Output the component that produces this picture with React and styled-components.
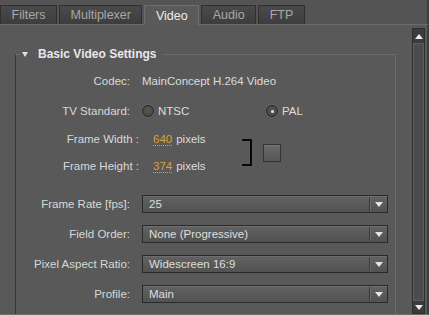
import React from 'react'
import styled, { createGlobalStyle, css } from 'styled-components'

const Global = createGlobalStyle`
    body {
        margin: 0;
        background: #555555;
        font-family: "Liberation Sans", "Noto Sans", sans-serif;
        font-size: 11.5px;
    }
`;

const Panel = styled.div`
    width: 429px;
    height: 315px;
    background: #595959;
    display: flex;
    flex-direction: column;
    overflow: hidden;
`;

const TabBar = styled.div`
    display: flex;
    gap: 2px;
    padding-top: 5px;
    background: #545454;
    border-bottom: 1px solid #6b6b6b;
    border-right: 2px solid #3e3e3e;
`;

const Tab = styled.div`
    box-sizing: border-box;
    height: 19px;
    padding: 0 10.5px;
    display: flex;
    align-items: center;
    font-size: 12.5px;
    border: 1px solid #303030;
    border-bottom: none;
    background: linear-gradient(#4a4a4a, #3d3d3d);
    color: #a9a9a9;
    ${p => p.$active && css`
        height: 20px;
        margin-bottom: -1px;
        background: #5a5a5a;
        border-color: #6d6d6d;
        color: #ececec;
    `}
`;

const Body = styled.div`
    flex: 1;
    display: flex;
    min-height: 0;
    border-bottom: 1px solid #6e6e6e;
`;

const Content = styled.div`
    flex: 1;
    padding: 22px 16px 0 15px;
    overflow: hidden;
`;

const Group = styled.fieldset`
    margin: 0;
    padding: 0 7px 20px 0;
    min-width: 0;
    border: 1px solid #6c6c6c;
    border-left-color: #363636;
    border-bottom: none;
`;

const Legend = styled.legend`
    margin-left: 4px;
    padding: 0 7px 0 2px;
    display: flex;
    align-items: center;
    gap: 10px;
    font-weight: bold;
    font-size: 12px;
    color: #e8e8e8;
`;

const Caret = styled.span`
    width: 0;
    height: 0;
    border-left: 3.5px solid transparent;
    border-right: 3.5px solid transparent;
    border-top: 5px solid #e0e0e0;
`;

const Row = styled.div`
    display: grid;
    grid-template-columns: 114px 1fr;
    column-gap: 12px;
    align-items: center;
    height: 18px;
    margin-top: ${p => p.$mt}px;
`;

const Label = styled.div`
    text-align: right;
    color: #d8d8d8;
    white-space: nowrap;
`;

const Value = styled.div`
    color: #dcdcdc;
    white-space: nowrap;
`;

const Radios = styled.div`
    display: grid;
    grid-template-columns: 124px 1fr;
`;

const RadioOption = styled.label`
    display: flex;
    align-items: center;
    gap: 4px;
    color: #dcdcdc;
`;

const RadioDot = styled.span`
    box-sizing: border-box;
    width: 12px;
    height: 12px;
    border-radius: 50%;
    border: 1px solid #262626;
    background: radial-gradient(circle at 50% 40%, #575757, #434343);
    box-shadow: 0 0 0 1px rgba(255, 255, 255, 0.07);
    display: flex;
    align-items: center;
    justify-content: center;
    &::after {
        content: "";
        width: 3px;
        height: 3px;
        border-radius: 50%;
        background: ${p => (p.$on ? '#e4e4e4' : 'transparent')};
    }
`;

const DimsRow = styled.div`
    display: flex;
    align-items: center;
    margin-top: 10px;
`;

const DimsGrid = styled.div`
    display: grid;
    grid-template-columns: 123px 89px;
    column-gap: 14px;
    row-gap: 9px;
    align-items: center;
    & > div {
        height: 18px;
        display: flex;
        align-items: center;
    }
`;

const DimLabel = styled.div`
    justify-content: flex-end;
    color: #d8d8d8;
    white-space: nowrap;
`;

const Num = styled.span`
    color: #d9a032;
    border-bottom: 1px dotted #d9a032;
    line-height: 12px;
    margin-right: 4px;
`;

const Bracket = styled.div`
    box-sizing: border-box;
    width: 10px;
    height: 27px;
    border: 2px solid #080808;
    border-left: none;
`;

const LinkButton = styled.div`
    box-sizing: border-box;
    width: 18px;
    height: 18px;
    margin-left: 11px;
    border: 1px solid #343434;
    background: linear-gradient(#6a6a6a, #575757);
    box-shadow: inset 0 1px 0 rgba(255, 255, 255, 0.1);
`;

const Select = styled.div`
    box-sizing: border-box;
    height: 18px;
    display: flex;
    align-items: center;
    border: 1px solid #2a2a2a;
    background: linear-gradient(#626262, #525252);
    box-shadow: inset 0 1px 0 rgba(255, 255, 255, 0.08);
    color: #dedede;
`;

const SelectText = styled.span`
    flex: 1;
    padding-left: 6px;
    white-space: nowrap;
`;

const SelectDivider = styled.span`
    width: 1px;
    height: 14px;
    background: #3a3a3a;
    box-shadow: 1px 0 0 #6a6a6a;
`;

const SelectArrow = styled.span`
    width: 17px;
    display: flex;
    justify-content: center;
    &::after {
        content: "";
        border-left: 4px solid transparent;
        border-right: 4px solid transparent;
        border-top: 5px solid #e6e6e6;
    }
`;

const ScrollBar = styled.div`
    width: 13px;
    margin: 3px 2px 0 0;
    display: flex;
    flex-direction: column;
    background: #484848;
    border: 1px solid #2e2e2e;
    box-sizing: border-box;
`;

const ScrollButton = styled.div`
    height: ${p => p.$h}px;
    display: flex;
    align-items: center;
    justify-content: center;
    background: #3c3c3c;
    &::after {
        content: "";
        border-left: 4px solid transparent;
        border-right: 4px solid transparent;
        ${p => (p.$up ? 'border-bottom: 5px solid #ececec;' : 'border-top: 5px solid #ececec;')}
    }
`;

const Thumb = styled.div`
    flex: 1;
    border: 1px solid #5e5e5e;
    background: #4c4c4c;
`;

const Side = styled.div`
    width: 2px;
    background: #3e3e3e;
`;

const tabs = ['Filters', 'Multiplexer', 'Video', 'Audio', 'FTP'];

const selects = [
    { label: 'Frame Rate [fps]:', value: '25', mt: 20 },
    { label: 'Field Order:', value: 'None (Progressive)', mt: 12 },
    { label: 'Pixel Aspect Ratio:', value: 'Widescreen 16:9', mt: 12 },
    { label: 'Profile:', value: 'Main', mt: 12 },
];

const App = () => {
    return <Panel>
        <Global />
        <TabBar>
            {tabs.map(t => <Tab key={t} $active={t === 'Video'}>{t}</Tab>)}
        </TabBar>
        <Body>
            <Content>
                <Group>
                    <Legend><Caret />Basic Video Settings</Legend>
                    <Row $mt={11}>
                        <Label>Codec:</Label>
                        <Value>MainConcept H.264 Video</Value>
                    </Row>
                    <Row $mt={12}>
                        <Label>TV Standard:</Label>
                        <Radios>
                            <RadioOption><RadioDot />NTSC</RadioOption>
                            <RadioOption><RadioDot $on />PAL</RadioOption>
                        </Radios>
                    </Row>
                    <DimsRow>
                        <DimsGrid>
                            <DimLabel>Frame Width :</DimLabel>
                            <Value><Num>640</Num>pixels</Value>
                            <DimLabel>Frame Height :</DimLabel>
                            <Value><Num>374</Num>pixels</Value>
                        </DimsGrid>
                        <Bracket />
                        <LinkButton />
                    </DimsRow>
                    {selects.map(s => (
                        <Row key={s.label} $mt={s.mt}>
                            <Label>{s.label}</Label>
                            <Select>
                                <SelectText>{s.value}</SelectText>
                                <SelectDivider />
                                <SelectArrow />
                            </Select>
                        </Row>
                    ))}
                </Group>
            </Content>
            <ScrollBar>
                <ScrollButton $up $h={14} />
                <Thumb />
                <ScrollButton $h={12} />
            </ScrollBar>
            <Side />
        </Body>
    </Panel>
}

export default App
